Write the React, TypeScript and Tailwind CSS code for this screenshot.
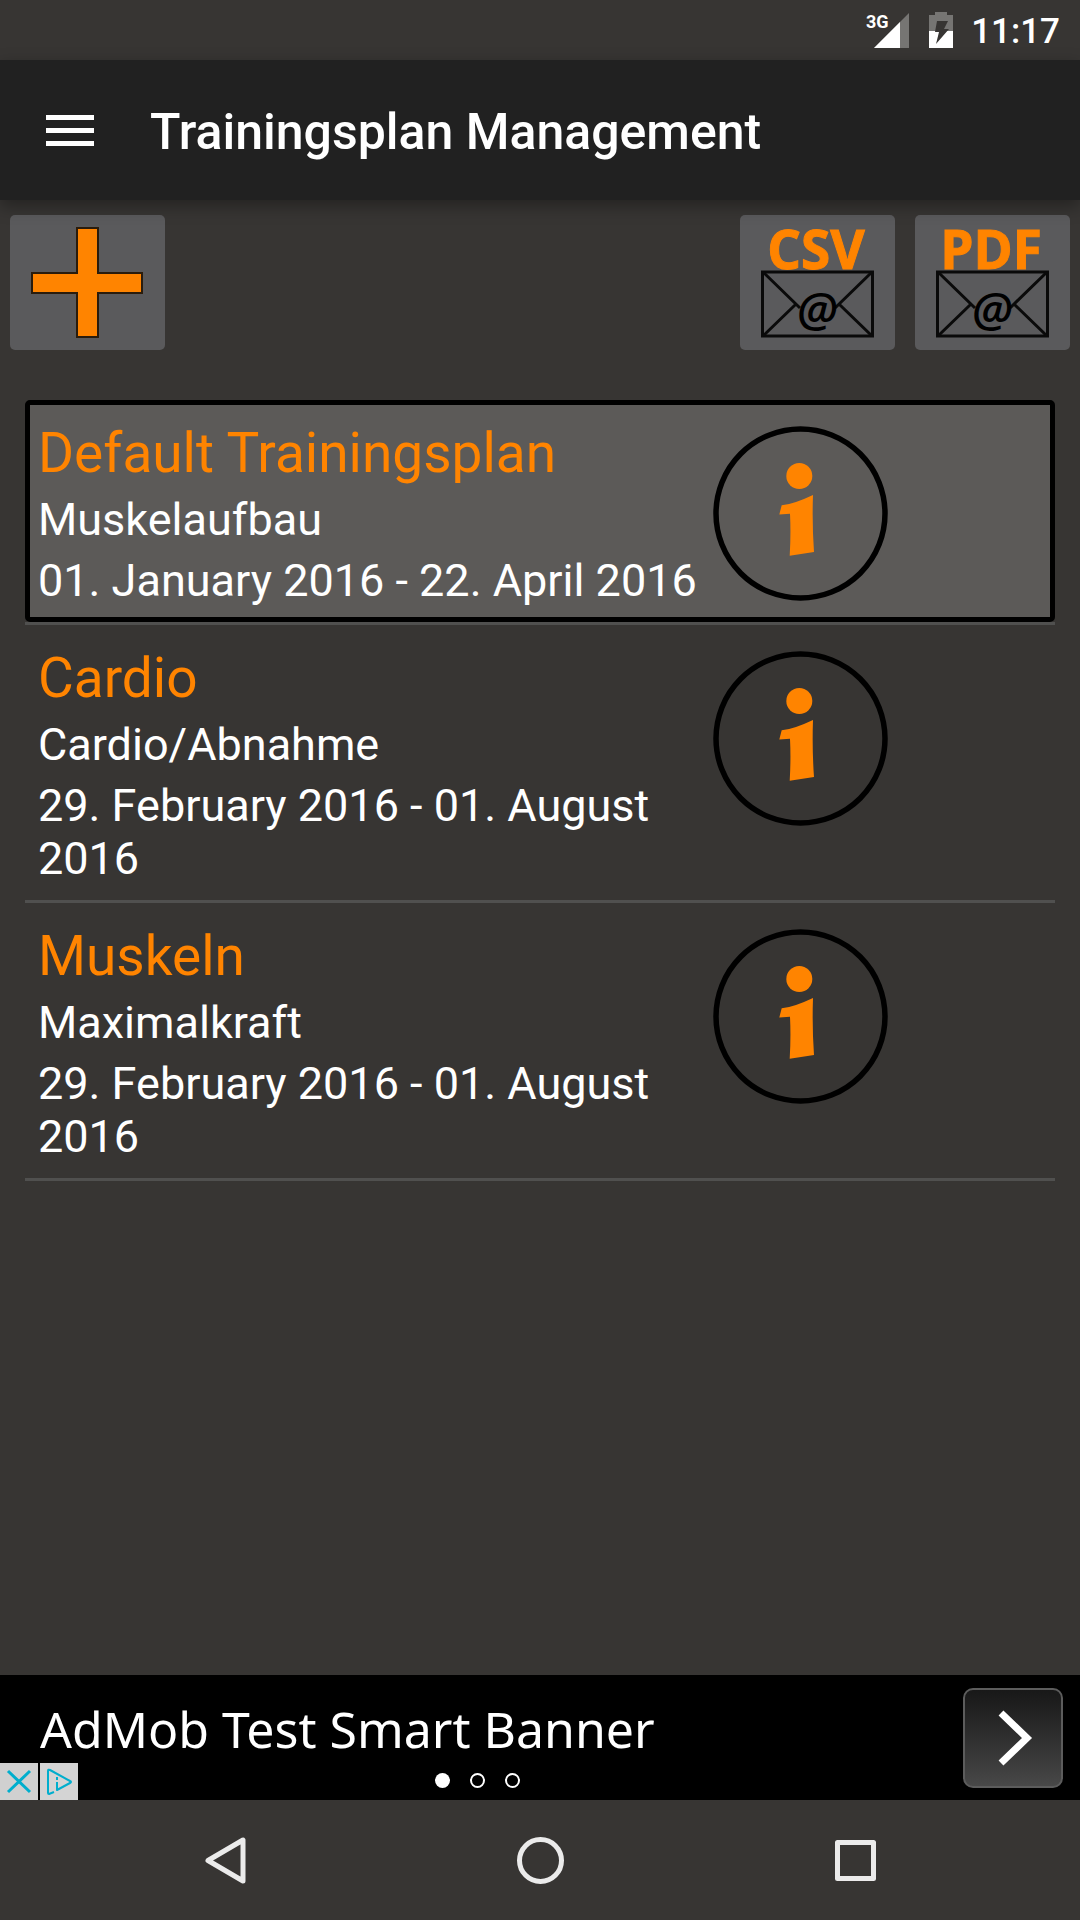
type Plan = { name: string; goal: string; period: string; selected?: boolean };

const plans: Plan[] = [
  { name: 'Default Trainingsplan', goal: 'Muskelaufbau', period: '01. January 2016 - 22. April 2016', selected: true },
  { name: 'Cardio', goal: 'Cardio/Abnahme', period: '29. February 2016 - 01. August 2016' },
  { name: 'Muskeln', goal: 'Maximalkraft', period: '29. February 2016 - 01. August 2016' },
];

function StatusBar() {
  return (
    <div className="flex h-[60px] items-end justify-end px-5">
      <svg className="mr-5 mb-[10px] h-10 w-11" viewBox="0 0 44 40" aria-label="3G signal">
        <path d="M9 38 L44 3 V38 Z" fill="#767573" />
        <path d="M9 38 L35 12 V38 Z" fill="#fff" />
        <text x="1" y="18" fill="#fff" fontSize="18" className="font-['Roboto'] font-bold">3G</text>
      </svg>
      <svg className="mr-[18px] mb-[10px] h-10 w-6" viewBox="0 0 24 40" aria-label="Battery">
        <path d="M6 2h12v3h6v16H0V5h6z" fill="#767573" />
        <path d="M0 21h24v17H0z" fill="#fff" />
        <path d="M8 11h11l-4 8h5L7 34l3-12H6z" fill="#373533" />
      </svg>
      <span className="text-[35px] leading-[56px] font-medium">11:17</span>
    </div>
  );
}

function PlusIcon() {
  return (
    <svg className="h-[115px] w-[115px]" viewBox="0 0 115 115">
      <path
        d="M47 3h21v45h44v20H68v44H47V68H2V48h45z"
        fill="#ff8400"
        stroke="#2a1c0c"
        strokeWidth="2"
      />
    </svg>
  );
}

function MailIcon({ label }: { label: string }) {
  return (
    <svg className="h-[135px] w-[155px] overflow-visible" viewBox="0 0 155 135">
      <text
        x="76"
        y="54"
        textAnchor="middle"
        fontSize="53"
        fill="#ff8400"
        stroke="#ff8400"
        strokeWidth="1"
        className="font-['Open_Sans'] font-bold"
      >
        {label}
      </text>
      <g fill="none" stroke="#0a0a0a" strokeWidth="3">
        <rect x="22.500" y="57" width="110" height="64" />
        <path d="M23 57 L60 93 M132 57 L95 93 M23 121 L55 90 M132 121 L100 90" />
      </g>
      <text
        x="77"
        y="112"
        textAnchor="middle"
        fontSize="47"
        fill="#000"
        className="font-['Open_Sans'] font-semibold italic"
      >
        @
      </text>
    </svg>
  );
}

function InfoIcon() {
  return (
    <svg className="h-[175px] w-[175px]" viewBox="0 0 175 175">
      <circle cx="87.5" cy="87.5" r="84.5" fill="none" stroke="#000" strokeWidth="5.5" />
      <circle cx="86.3" cy="50" r="13" fill="#ff8400" />
      <path d="M66.3 88.4 L68.7 79.3 Q80 78.5 100 69 Q99 98 101 126 L76.7 129.7 Q78 108 77 87.7 Z" fill="#ff8400" />
    </svg>
  );
}

const toolButton = 'flex h-[135px] w-[155px] items-center justify-center rounded-[5px] bg-[#5a5a5c]';

function PlanRow({ plan }: { plan: Plan }) {
  return (
    <li className="border-b-[3px] border-[#50504f]">
      <div
        className={
          plan.selected
            ? 'grid grid-cols-3 rounded-[5px] border-5 border-black bg-[#5c5a58] px-2 pt-[15px] pb-[10px]'
            : 'grid grid-cols-3 px-[13px] pt-5 pb-[15px]'
        }
      >
        <div className="col-span-2 text-[45px] leading-[53px]">
          <h2 className="pb-[6px] text-[55px] leading-[67px] text-[#ff8400]">{plan.name}</h2>
          <p>{plan.goal}</p>
          <p className="pt-2">{plan.period}</p>
        </div>
        <div className="pt-[6px] pl-[6px]">
          <button type="button" aria-label={`Info ${plan.name}`} className="block">
            <InfoIcon />
          </button>
        </div>
      </div>
    </li>
  );
}

function AdBanner() {
  return (
    <aside className="relative flex h-[125px] items-center bg-black pr-[17px] pl-10 font-['Noto_Sans']">
      <a href="#ad" className="flex-1 pb-[18px] text-[50px] leading-[68px]">AdMob Test Smart Banner</a>
      <button
        type="button"
        aria-label="Open ad"
        className="flex h-[100px] w-[100px] items-center justify-center rounded-[10px] border-2 border-[#5c5c5c] bg-linear-to-b from-[#181818] to-[#484848]"
      >
        <svg className="h-[60px] w-[60px]" viewBox="0 0 60 60" fill="none" stroke="#fff" strokeWidth="7">
          <path d="M18 5 L44 30 L18 55" />
        </svg>
      </button>
      <div className="absolute bottom-0 left-0 flex gap-[2px]">
        <button type="button" aria-label="Close ad" className="h-[37px] w-[38px] bg-[#d0d0d0]">
          <svg viewBox="0 0 38 37" fill="none" stroke="#00aecd" strokeWidth="3">
            <path d="M8 8 L30 29 M30 8 L8 29" />
          </svg>
        </button>
        <button type="button" aria-label="Ad choices" className="h-[37px] w-[38px] bg-[#d4d4d4]">
          <svg viewBox="0 0 38 37" fill="none" stroke="#00aecd" strokeWidth="2" strokeLinejoin="round">
            <path d="M14 29 L9 31 Q8 31 8 30 V8 Q8 6 10 7 L30 18 Q32 19 30 20 L17 27 V19 M17 14 V17" />
          </svg>
        </button>
      </div>
      <div className="absolute inset-x-0 bottom-3 flex justify-center gap-5 pr-[125px]">
        <span className="h-[15px] w-[15px] rounded-full bg-white" />
        <span className="h-[15px] w-[15px] rounded-full border-2 border-white" />
        <span className="h-[15px] w-[15px] rounded-full border-2 border-white" />
      </div>
    </aside>
  );
}

function NavBar() {
  return (
    <nav className="grid h-[120px] grid-cols-3 place-items-center px-17">
      <button type="button" aria-label="Back">
        <svg className="h-[50px] w-[50px]" viewBox="0 0 50 50" fill="none" stroke="#ebebeb" strokeWidth="5" strokeLinejoin="round">
          <path d="M43 5 V46 L8 25.500 Z" />
        </svg>
      </button>
      <button type="button" aria-label="Home">
        <svg className="h-[50px] w-[50px]" viewBox="0 0 50 50" fill="none" stroke="#ebebeb" strokeWidth="5">
          <circle cx="25.500" cy="25.500" r="21" />
        </svg>
      </button>
      <button type="button" aria-label="Recent apps">
        <svg className="h-[50px] w-[50px]" viewBox="0 0 50 50" fill="none" stroke="#ebebeb" strokeWidth="5" strokeLinejoin="round">
          <rect x="7.500" y="7.500" width="36" height="36" />
        </svg>
      </button>
    </nav>
  );
}

export default function App() {
  return (
    <div className="flex min-h-screen flex-col bg-[#373533] font-['Roboto',sans-serif] text-white">
      <StatusBar />
      <header className="relative z-10 flex h-[140px] items-center gap-14 bg-[#212121] px-[46px] shadow-[0_6px_16px_rgba(0,0,0,0.35)]">
        <button type="button" aria-label="Menu" className="flex w-12 flex-col gap-2">
          <span className="h-[5px] bg-white" />
          <span className="h-[5px] bg-white" />
          <span className="h-[5px] bg-white" />
        </button>
        <h1 className="pt-1 text-[50px] leading-[60px] font-medium">Trainingsplan Management</h1>
      </header>
      <main className="flex-1">
        <div className="flex gap-5 px-[10px] pt-[15px]">
          <button type="button" aria-label="Add plan" className={`${toolButton} mr-auto`}>
            <PlusIcon />
          </button>
          <button type="button" aria-label="Send CSV by mail" className={toolButton}>
            <MailIcon label="CSV" />
          </button>
          <button type="button" aria-label="Send PDF by mail" className={toolButton}>
            <MailIcon label="PDF" />
          </button>
        </div>
        <ul className="mx-[25px] mt-[50px]">
          {plans.map((plan) => (
            <PlanRow key={plan.name} plan={plan} />
          ))}
        </ul>
      </main>
      <AdBanner />
      <NavBar />
    </div>
  );
}
